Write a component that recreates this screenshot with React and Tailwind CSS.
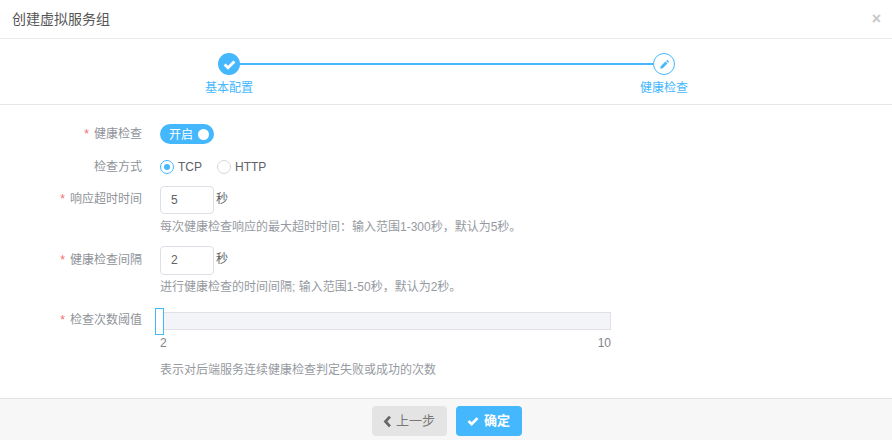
import React from 'react'

const BLUE = 'text-[#44b7fd]'

function Check({ className }) {
  return (
    <svg viewBox="0 0 16 16" className={className} fill="none" stroke="currentColor" strokeWidth="3.6" strokeLinecap="butt">
      <path d="M2 8l4.2 4L14 4.2" />
    </svg>
  )
}

function Pencil({ className }) {
  return (
    <svg viewBox="0 0 16 16" className={className} fill="currentColor">
      <path d="M2.5 10.6l6.9-6.9 2.9 2.9-6.9 6.9-3.6.7zM10.4 2.8l.9-.9c.4-.4 1-.4 1.4 0l1.4 1.4c.4.4.4 1 0 1.4l-.9.9z" />
    </svg>
  )
}

function Row({ label, required, className = '', labelClass = '', children }) {
  return (
    <div className={`flex ${className}`}>
      <div className={`w-[142px] shrink-0 text-right text-xs text-[#8f9399] leading-5 ${labelClass}`}>
        {required && <span className="text-[#f56c6c] mr-[5px]">*</span>}
        {label}
      </div>
      <div className="ml-[18px] flex-1">{children}</div>
    </div>
  )
}

function Hint({ className = '', children }) {
  return <p className={`text-xs leading-5 text-[#969a9f] ${className}`}>{children}</p>
}

function NumberBox({ value, height = 'h-[28px]' }) {
  return (
    <div className="flex items-start">
      <div className={`w-[54px] ${height} border border-[#dcdfe6] rounded bg-white pl-[10px] leading-[26px] text-xs text-[#606266]`}>{value}</div>
      <span className="ml-[2px] text-xs leading-[26px] text-[#606266]">秒</span>
    </div>
  )
}

function Radio({ label, checked }) {
  return (
    <label className="flex items-center mr-[15px]">
      <span className={`w-[14px] h-[14px] rounded-full border flex items-center justify-center ${checked ? 'border-[#44b7fd]' : 'border-[#d5d8de]'}`}>
        {checked && <span className="w-[6px] h-[6px] rounded-full bg-[#44b7fd]" />}
      </span>
      <span className="ml-1 text-[#606266] text-xs">{label}</span>
    </label>
  )
}

export default function App() {
  return (
    <div className="w-[892px] h-[440px] flex flex-col bg-white text-[13px] font-['Liberation_Sans','Noto_Sans_CJK_SC',sans-serif] overflow-hidden">
      {/* 标题 */}
      <div className="h-[39px] shrink-0 flex items-center justify-between pl-3 pr-[11px] border-b border-[#ebebeb]">
        <h1 className="text-[#555] text-sm">创建虚拟服务组</h1>
        <span className="text-[#c8c8c8] text-base font-bold leading-none">×</span>
      </div>

      {/* 步骤条 */}
      <div className="h-[66px] shrink-0 border-b border-[#e6e6e6] pt-[14px]">
        <div className="flex items-center pl-[218px] pr-[217px]">
          <span className="w-[22px] h-[22px] rounded-full bg-[#44b7fd] text-white flex items-center justify-center">
            <Check className="w-[13px] h-[13px]" />
          </span>
          <div className="flex-1 h-[2px] bg-[#44b7fd]" />
          <span className={`w-[22px] h-[22px] rounded-full border border-[#44b7fd] flex items-center justify-center ${BLUE}`}>
            <Pencil className="w-[11px] h-[11px]" />
          </span>
        </div>
        <div className={`flex justify-between pl-[205px] pr-[204px] mt-[3px] text-xs leading-5 ${BLUE}`}>
          <span>基本配置</span>
          <span>健康检查</span>
        </div>
      </div>

      {/* 表单 */}
      <div className="flex-1 pt-[19px]">
        <Row label="健康检查" required>
          <div className="w-[54px] h-5 rounded-full bg-[#44b7fd] text-white text-xs flex items-center justify-between pl-[9px] pr-[5px]">
            <span className="mt-px">开启</span>
            <span className="w-[11px] h-[11px] rounded-full bg-white" />
          </div>
        </Row>

        <Row label="检查方式" className="mt-[13px]">
          <div className="flex items-center h-5">
            <Radio label="TCP" checked />
            <Radio label="HTTP" />
          </div>
        </Row>

        <Row label="响应超时时间" required className="mt-[9px]" labelClass="mt-[3px]">
          <NumberBox value="5" />
          <Hint className="mt-[3px]">每次健康检查响应的最大超时时间：输入范围1-300秒，默认为5秒。</Hint>
        </Row>

        <Row label="健康检查间隔" required className="mt-[9px]" labelClass="mt-[4px]">
          <NumberBox value="2" height="h-[29px]" />
          <Hint className="mt-[2px]">进行健康检查的时间间隔; 输入范围1-50秒，默认为2秒。</Hint>
        </Row>

        <Row label="检查次数阈值" required className="mt-[15px]" labelClass="-mt-[2px]">
          <div className="w-[451px]">
            <div className="relative h-[18px] bg-[#f3f4f7] border border-[#dfe1e6]">
              <span className="absolute -left-[6px] -top-[5px] w-[9px] h-[27px] bg-white border border-[#44b7fd]" />
            </div>
            <div className="flex justify-between mt-[3px] text-xs leading-5 text-[#7f848c]">
              <span>2</span>
              <span>10</span>
            </div>
            <Hint className="mt-[7px]">表示对后端服务连续健康检查判定失败或成功的次数</Hint>
          </div>
        </Row>
      </div>

      {/* 底部按钮 */}
      <div className="h-[42px] shrink-0 bg-[#f7f7f7] border-t border-[#e3e3e3] flex justify-center items-start pt-[7px] gap-[9px] pl-px">
        <button className="w-[75px] h-[30px] rounded bg-[#e4e4e4] text-[#777] text-[13px] flex items-center justify-center">
          <svg viewBox="0 0 10 16" className="w-[9px] h-[13px] mr-[4px]" fill="none" stroke="#666" strokeWidth="3.4">
            <path d="M8 2L2.5 8 8 14" />
          </svg>
          上一步
        </button>
        <button className="w-[66px] h-[30px] rounded bg-[#44b7fd] text-white text-[13px] font-bold flex items-center justify-center">
          <Check className="w-3 h-3 mr-[5px]" />
          确定
        </button>
      </div>
    </div>
  )
}
